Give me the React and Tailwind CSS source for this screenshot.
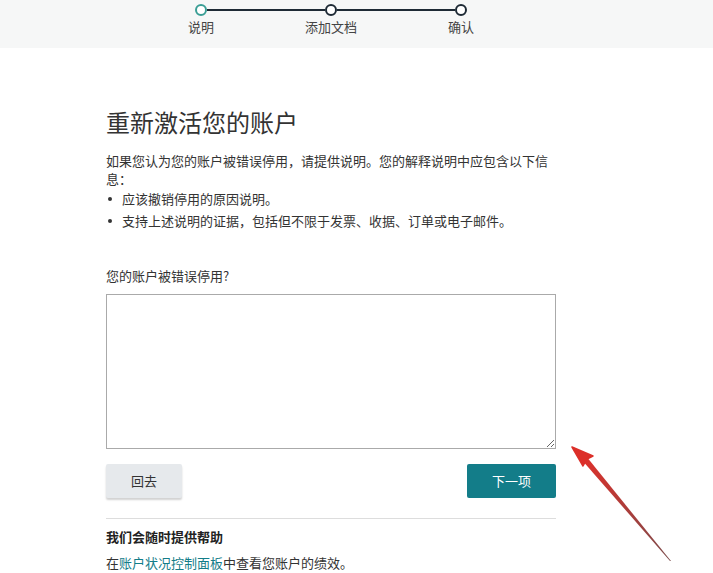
export default function App() {
  const font = { fontFamily: '"Noto Sans CJK SC", "Liberation Sans", sans-serif' }
  return (
    <div className="relative min-h-[573px] w-[713px] overflow-hidden bg-white text-[#333]" style={font}>
      {/* stepper */}
      <div className="h-[48px] bg-[#f6f7f7] pt-[4px]">
        <div className="ml-[195px] flex items-center">
          <span className="h-[12px] w-[12px] rounded-full border-2 border-[#3a9e95] bg-white" />
          <span className="h-[2px] w-[118px] bg-[#1e2a35]" />
          <span className="h-[12px] w-[12px] rounded-full border-2 border-[#1e2a35] bg-white" />
          <span className="h-[2px] w-[118px] bg-[#1e2a35]" />
          <span className="h-[12px] w-[12px] rounded-full border-2 border-[#1e2a35] bg-white" />
        </div>
        <div className="ml-[136px] mt-[2px] flex text-[13px] leading-[18px] text-[#444]">
          <span className="w-[130px] text-center">说明</span>
          <span className="w-[130px] text-center">添加文档</span>
          <span className="w-[130px] text-center">确认</span>
        </div>
      </div>

      <div className="ml-[106px] w-[450px] pt-[58px]">
        <h1 className="text-[24px] leading-[32px] font-normal text-[#333]">重新激活您的账户</h1>
        <p className="mt-[14px] text-[13px] leading-[18px]">
          如果您认为您的账户被错误停用，请提供说明。您的解释说明中应包含以下信息：
        </p>
        <ul className="text-[13px] leading-[22px]">
          <li className="flex items-center">
            <span className="ml-[2px] mr-[10px] h-[4px] w-[4px] rounded-full bg-[#333]" />
            应该撤销停用的原因说明。
          </li>
          <li className="flex items-center">
            <span className="ml-[2px] mr-[10px] h-[4px] w-[4px] rounded-full bg-[#333]" />
            支持上述说明的证据，包括但不限于发票、收据、订单或电子邮件。
          </li>
        </ul>

        <label className="mt-[35px] block text-[13px] leading-[18px]">您的账户被错误停用?</label>
        <textarea className="mt-[9px] block h-[155px] w-[450px] resize-y border border-[#aaa] bg-white outline-none" />

        <div className="mt-[15px] flex justify-between">
          <button className="h-[34px] w-[76px] rounded-[2px] bg-[#e6e9ec] text-[13px] text-[#333] shadow-[0_2px_2px_rgba(0,0,0,0.18)]">回去</button>
          <button className="h-[34px] w-[89px] rounded-[2px] bg-[#137d89] text-[13px] text-white">下一项</button>
        </div>

        <div className="mt-[20px] border-t border-[#ddd] pt-[8px]">
          <h2 className="text-[13px] leading-[20px] font-bold text-[#222]">我们会随时提供帮助</h2>
          <p className="mt-[6px] text-[13px] leading-[20px]">
            在<a className="text-[#137d89]">账户状况控制面板</a>中查看您账户的绩效。
          </p>
        </div>
      </div>

      {/* red annotation arrow */}
      <svg className="absolute left-[565px] top-[440px]" width="115" height="130" viewBox="0 0 115 130">
        <defs>
          <linearGradient id="shaft" x1="0" y1="0" x2="1" y2="1">
            <stop offset="0" stopColor="#e0302a" />
            <stop offset="1" stopColor="#7a4a4a" />
          </linearGradient>
        </defs>
        <polygon points="16,19 21,16 106,121 105,121" fill="url(#shaft)" />
        <path d="M7 7 L28 16 L22 19 L18 26 Z" fill="#dc2f29" stroke="#dc2f29" strokeWidth="1.5" strokeLinejoin="round" />
      </svg>
    </div>
  )
}
